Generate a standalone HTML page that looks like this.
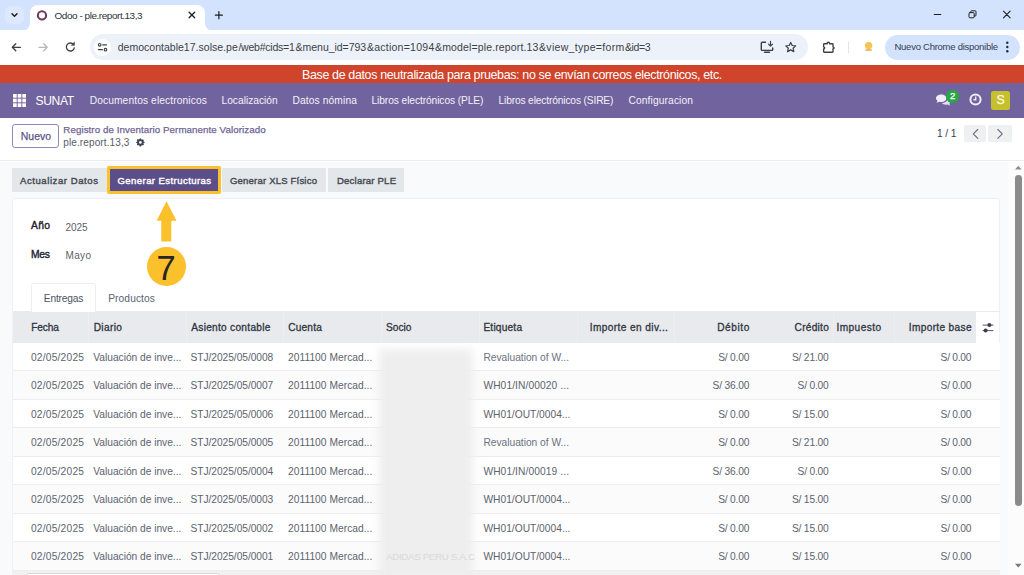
<!DOCTYPE html>
<html lang="es"><head><meta charset="utf-8"><title>Odoo - ple.report.13,3</title>
<style>
*{box-sizing:border-box;margin:0;padding:0}
html,body{width:1024px;height:575px;overflow:hidden;background:#fff;font-family:"Liberation Sans","DejaVu Sans",sans-serif;font-size:11px;color:#374151}
body{position:relative}
.a{position:absolute}
.t{position:absolute;white-space:pre;display:block}
svg{position:absolute;overflow:visible}
#tabstrip{left:0;top:0;width:1024px;height:31px;background:#d3e3fd}
#tabsearch{left:5px;top:6px;width:19px;height:18px;border-radius:6px;background:#dde8fc}
#tab{left:30px;top:5px;width:175px;height:26px;background:#fff;border-radius:8px 8px 0 0}
#toolbar{left:0;top:30px;width:1024px;height:35px;background:#fff}
#url{left:90px;top:34px;width:718px;height:26px;border-radius:13px;background:#edf2fa}
#siteinfo{left:94px;top:39px;width:17px;height:17px;border-radius:9px;background:#fff}
#upd{left:885px;top:35px;width:134.5px;height:24.5px;border-radius:12.5px;background:#d3e3fd}
#sep{left:848px;top:41.500px;width:1px;height:11px;background:#dbe3f3}
#red{left:0;top:64.800px;width:1024px;height:18.400px;background:#d0442c}
#nav{left:0;top:83px;width:1024px;height:34.600px;background:#71639e}
#avatar{left:991px;top:90.8px;width:19.4px;height:19px;border-radius:2.5px;background:#c6c02c}
#badge{left:946.4px;top:90.1px;width:12.6px;height:12.6px;border-radius:50%;background:#28a745}
#cp{left:0;top:117.600px;width:1024px;height:43.900px;background:#fff;border-bottom:1px solid #e9ebee}
#nuevo{left:12px;top:123.700px;width:47.200px;height:24px;border:1px solid #9187b8;border-radius:3px;background:#fff}
.pg{top:124.500px;height:17.800px;background:#eef0f2;border-radius:2px}
#content{left:0;top:161.5px;width:1008px;height:414px;background:#f9fafb}
#track{left:1008px;top:161.5px;width:16px;height:414px;background:#fcfcfc}
#thumb{left:1015px;top:174.8px;width:6.7px;height:331px;border-radius:3.4px;background:#8b8b8b}
.sb{position:absolute;top:168.200px;height:23.500px;background:#e4e7ea;border-radius:1px}
#hl{left:107.3px;top:165.5px;width:114px;height:28.5px;background:#5c4e88;border:3px solid #f9c12e;border-radius:2px}
#sheet{left:12px;top:197.900px;width:988.3px;height:380px;background:#fff;border:1px solid #eef0f2;border-radius:3px}
#tabE{left:31px;top:283px;width:64.500px;height:29.500px;background:#fff;border:1px solid #eceef0;border-bottom:none;border-radius:3px 3px 0 0}
#thead{left:12.5px;top:312px;width:963.7px;height:30.5px;background:#e8eaed}
.cs{position:absolute;top:312px;width:1px;height:30.500px;background:#eceef0}
.row{position:absolute;left:12.500px;width:987.500px;height:28.500px;border-bottom:1px solid #ebedf0}
.odd{background:#fff}.even{background:#fbfbfc}
#blur{left:379px;top:349px;width:94px;height:232px;background:#eeeeee;filter:blur(4px)}
#circ{left:147.3px;top:246.8px;width:39px;height:39px;border-radius:50%;background:#fbc12d}
#bottom{left:12.500px;top:571px;width:987.500px;height:5px;background:#f1f1f2}
#hthumb{left:26px;top:572.500px;width:194px;height:5px;border:1px solid #d6d8db;border-radius:3px;background:#fff}
</style></head><body>
<div class="a" id="tabstrip"></div>
<div class="a" id="tabsearch"></div>
<div class="a" id="tab"></div>
<svg style="left:22px;top:23px" width="8" height="8"><path d="M8 8H0A8 8 0 0 0 8 0Z" fill="#fff"/></svg>
<svg style="left:205px;top:23px" width="8" height="8"><path d="M0 8H8A8 8 0 0 1 0 0Z" fill="#fff"/></svg>
<div class="a" id="toolbar"></div>
<div class="a" id="url"></div>
<div class="a" id="siteinfo"></div>
<div class="a" id="upd"></div>
<div class="a" id="sep"></div>
<!-- chrome icons -->
<svg style="left:0;top:0" width="1024" height="65" viewBox="0 0 1024 65" fill="none" stroke-linecap="round" stroke-linejoin="round">
 <path d="M12 13.800l2.500 2.500 2.500-2.500" stroke="#1f1f1f" stroke-width="1.500"/>
 <circle cx="42" cy="15.400" r="4.100" stroke="#6e3d59" stroke-width="2.100"/>
 <path d="M189.100 12.200l5.600 5.600M194.700 12.200l-5.600 5.600" stroke="#1f1f1f" stroke-width="1.300"/>
 <path d="M215.400 15.200h7M218.900 11.700v7" stroke="#1f1f1f" stroke-width="1.200"/>
 <path d="M934.200 14.500h6.600" stroke="#1f1f1f" stroke-width="1"/>
 <rect x="969" y="12.600" width="5.200" height="5.200" rx="1" stroke="#1f1f1f" stroke-width="1"/>
 <path d="M970.800 12.600v-1a.8.800 0 0 1 .8-.8h3.600a.8.800 0 0 1 .8.800v3.600a.8.800 0 0 1-.8.800h-1" stroke="#1f1f1f" stroke-width="1"/>
 <path d="M1003.500 11.200l6.600 6.600M1010.100 11.200l-6.600 6.600" stroke="#1f1f1f" stroke-width="1.100"/>
 <path d="M20.500 47.300H12.500M15.800 43.800L12.300 47.300l3.500 3.500" stroke="#3c4043" stroke-width="1.300"/>
 <path d="M39 47.300H47M43.700 43.800L47.200 47.300 43.700 50.800" stroke="#b4b7bc" stroke-width="1.300"/>
 <path d="M73.600 44.600A4 4 0 1 0 74.300 47.800" stroke="#3c4043" stroke-width="1.300"/>
 <path d="M74.500 42.300v3h-3z" fill="#3c4043" stroke="#3c4043" stroke-width=".5"/>
 <circle cx="99.700" cy="44.800" r="1.300" stroke="#3c4043" stroke-width="1.100"/><path d="M102.700 44.800h3.800" stroke="#3c4043" stroke-width="1.200"/>
 <circle cx="105.500" cy="49.700" r="1.300" stroke="#3c4043" stroke-width="1.100"/><path d="M98.500 49.700h3.800" stroke="#3c4043" stroke-width="1.200"/>
 <path d="M765.500 42.300h-3.300a.9.900 0 0 0-.9.900v6.300a.9.900 0 0 0 .9.900h9.600a.9.900 0 0 0 .9-.9v-1.500M764.500 52.300h5" stroke="#3c4043" stroke-width="1.400"/>
 <path d="M770.500 41.300v4.600M768.500 44.200l2 2 2-2" stroke="#3c4043" stroke-width="1.200"/>
 <path d="M790.700 42.400l1.500 3.100 3.400.4-2.500 2.300.7 3.400-3.100-1.700-3.100 1.700.7-3.400-2.500-2.300 3.400-.4z" stroke="#3c4043" stroke-width="1.200"/>
 <path d="M824.300 43.700H827a1.300 1.500 0 0 1 2.600 0H832.300a.7.700 0 0 1 .7.700V46.800a1.100 1.100 0 0 1 0 2.200V51.500a.7.700 0 0 1-.7.700H824.300a.7.700 0 0 1-.7-.7V49a1.100 1.100 0 0 0 0-2.200V44.400a.7.700 0 0 1 .7-.7z" stroke="#3c4043" stroke-width="1.350" stroke-linejoin="miter"/>
 <circle cx="868.600" cy="45.600" r="3.700" fill="#f6c452" stroke="none"/>
 <rect x="865.300" y="49.300" width="6.600" height="1.500" rx=".5" fill="#eaa840" stroke="none"/>
 <circle cx="1007.300" cy="42.800" r="1.200" fill="#1f2a44"/><circle cx="1007.300" cy="47" r="1.200" fill="#1f2a44"/><circle cx="1007.300" cy="51.200" r="1.200" fill="#1f2a44"/>
</svg>
<div class="a" id="red"></div>
<div class="a" id="nav"></div>
<svg style="left:13.400px;top:94px" width="13" height="13" viewBox="0 0 13 13" fill="#fff"><rect x="0" y="0" width="3.700" height="3.700"/><rect x="4.650" y="0" width="3.700" height="3.700"/><rect x="9.300" y="0" width="3.700" height="3.700"/><rect x="0" y="4.650" width="3.700" height="3.700"/><rect x="4.650" y="4.650" width="3.700" height="3.700"/><rect x="9.300" y="4.650" width="3.700" height="3.700"/><rect x="0" y="9.300" width="3.700" height="3.700"/><rect x="4.650" y="9.300" width="3.700" height="3.700"/><rect x="9.300" y="9.300" width="3.700" height="3.700"/></svg>
<!-- chat icon -->
<svg style="left:935.800px;top:93.800px" width="14.600" height="12.500" viewBox="0 0 14 12"><path d="M5 .5C2.200.5 0 2.100 0 4.100c0 1 .6 1.900 1.500 2.600-.2.700-.6 1.300-1.100 1.700 1 0 2-.4 2.700-.9.600.2 1.200.2 1.900.2 2.800 0 5-1.600 5-3.600S7.800.5 5 .5z" fill="#f1eef9"/><path d="M11 4.600c0 2.300-2.400 4.100-5.400 4.300.9.900 2.300 1.400 3.900 1.400.6 0 1.200-.1 1.700-.2.700.5 1.600.9 2.600.9-.5-.4-.8-1-1-1.600.8-.6 1.200-1.400 1.200-2.300 0-1.100-1.200-2.100-3-2.500z" fill="#e3def0"/></svg>
<div class="a" id="badge"></div>
<svg style="left:968.800px;top:92.500px" width="13" height="13" viewBox="0 0 13 13" fill="none"><circle cx="6.500" cy="6.500" r="5.100" stroke="#f0edf7" stroke-width="2"/><path d="M6.700 3.600v3.200H4.400" stroke="#f0edf7" stroke-width="1.400"/></svg>
<div class="a" id="avatar"></div>
<div class="a" id="cp"></div>
<div class="a" id="nuevo"></div>
<svg style="left:136px;top:137.800px" width="8.800" height="8.800" viewBox="-.5 -.5 11 11"><path d="M5 0l.9.100.3 1.200.9.400 1.100-.6 1.200 1.200-.6 1.100.4.900 1.200.3V5.500l-1.200.3-.4.900.6 1.100-1.200 1.200-1.100-.6-.9.400-.3 1.200H4.100l-.3-1.200-.9-.4-1.100.6L.600 7.800l.6-1.100-.4-.9L-.400 5.500V4.400l1.200-.3.400-.9-.6-1.100L1.800.900l1.100.6.900-.4L4.100.100z" fill="#374151"/><circle cx="5" cy="5" r="1.700" fill="#fff"/></svg>
<div class="a pg" style="left:964px;width:22px"></div>
<div class="a pg" style="left:988px;width:24px"></div>
<svg style="left:960px;top:124px" width="56" height="20" viewBox="0 0 56 20" fill="none" stroke="#6a717c" stroke-width="1.150" stroke-linecap="round" stroke-linejoin="round"><path d="M17.800 5.500L13.300 9.900l4.500 4.400"/><path d="M37.800 5.500l4.500 4.400-4.500 4.400"/></svg>
<div class="a" id="content"></div>
<div class="a" id="track"></div>
<div class="a" id="thumb"></div>
<svg style="left:1014px;top:164px" width="9" height="7"><path d="M1 5.600h6.600L4.300 1.700z" fill="#8b8b8b"/></svg>
<svg style="left:1014px;top:562px" width="9" height="7"><path d="M1 1.700h6.600L4.300 5.600z" fill="#7a7a7a"/></svg>
<div class="sb" style="left:12px;width:95px"></div>
<div class="sb" style="left:222px;width:104px"></div>
<div class="sb" style="left:327.500px;width:76.500px"></div>
<div class="a" id="hl"></div>
<div class="a" id="sheet"></div>
<div class="a" style="left:12.500px;top:311px;width:987.500px;height:1px;background:#e9ebee"></div>
<div class="a" id="tabE"></div>
<div class="a" id="thead"></div>
<div class="row odd" style="top:342.5px"></div>
<div class="row even" style="top:371.0px"></div>
<div class="row odd" style="top:399.5px"></div>
<div class="row even" style="top:428.0px"></div>
<div class="row odd" style="top:456.5px"></div>
<div class="row even" style="top:485.0px"></div>
<div class="row odd" style="top:513.5px"></div>
<div class="row even" style="top:542.0px"></div>
<div class="cs" style="left:88.0px"></div>
<div class="cs" style="left:186.0px"></div>
<div class="cs" style="left:283.0px"></div>
<div class="cs" style="left:381.0px"></div>
<div class="cs" style="left:478.5px"></div>
<div class="cs" style="left:577.0px"></div>
<div class="cs" style="left:674.0px"></div>
<div class="cs" style="left:833.0px"></div>
<div class="cs" style="left:894.0px"></div>
<div class="a" id="bottom"></div>
<div class="a" id="hthumb"></div>
<div class="a" id="blur"></div>
<!-- column settings icon -->
<svg style="left:981.500px;top:322px" width="12" height="12" viewBox="0 0 12 12" fill="none" stroke="#3b414b" stroke-width=".9"><path d="M.7 3.100h10.700M.7 8.600h10.700"/><circle cx="7.400" cy="3.100" r="2" fill="#3b414b" stroke="none"/><circle cx="3.600" cy="8.600" r="2" fill="#3b414b" stroke="none"/></svg>
<!-- arrow + circle -->
<svg style="left:150px;top:198px" width="34" height="46" viewBox="150 198 34 46"><path d="M166.500 201.300L176.500 220.700H171.300V241.600H161.300V220.700H156.600Z" fill="#fbc12d"/></svg>
<div class="a" id="circ"></div>
<span class="t" style="left:54.5px;top:9.00px;height:14px;line-height:14px;font-size:9.97px;color:#303338;letter-spacing:-0.45px;">Odoo - ple.report.13,3</span>
<span class="t" style="left:117.7px;top:40.00px;height:15px;line-height:15px;font-size:10.53px;color:#3c3f46;letter-spacing:0.01px;">democontable17.solse.pe</span><span class="t" style="left:238.4px;top:40.00px;height:15px;line-height:15px;font-size:10.53px;color:#3c3f46;letter-spacing:-0.23px;">/web#cids=1</span><span class="t" style="left:295.6px;top:40.00px;height:15px;line-height:15px;font-size:10.53px;color:#3c3f46;letter-spacing:-0.04px;">&amp;menu_id=793</span><span class="t" style="left:366.9px;top:40.00px;height:15px;line-height:15px;font-size:10.53px;color:#3c3f46;letter-spacing:0.25px;">&amp;action=1094</span><span class="t" style="left:435.0px;top:40.00px;height:15px;line-height:15px;font-size:10.53px;color:#3c3f46;letter-spacing:0.13px;">&amp;model=ple.report.13</span><span class="t" style="left:539.0px;top:40.00px;height:15px;line-height:15px;font-size:10.53px;color:#3c3f46;letter-spacing:0.31px;">&amp;view_type=form</span><span class="t" style="left:625.0px;top:40.00px;height:15px;line-height:15px;font-size:10.53px;color:#3c3f46;letter-spacing:-0.40px;">&amp;id=3</span>
<span class="t" style="left:894.5px;top:40.00px;height:13px;line-height:13px;font-size:9.51px;color:#333c52;letter-spacing:-0.26px;">Nuevo Chrome disponible</span>
<span class="t" style="left:302.0px;top:67.00px;height:17px;line-height:17px;font-size:12.46px;color:#ffffff;letter-spacing:-0.35px;">Base de datos neutralizada para pruebas: no se envían correos electrónicos, etc.</span>
<span class="t" style="left:35.5px;top:93.00px;height:17px;line-height:17px;font-size:12.09px;color:#ffffff;letter-spacing:-0.34px;">SUNAT</span>
<span class="t" style="left:89.7px;top:94.00px;height:14px;line-height:14px;font-size:10.23px;color:#f3f1f8;letter-spacing:0.11px;">Documentos electronicos</span>
<span class="t" style="left:221.5px;top:94.00px;height:14px;line-height:14px;font-size:10.23px;color:#f3f1f8;letter-spacing:0.00px;">Localización</span>
<span class="t" style="left:292.5px;top:94.00px;height:14px;line-height:14px;font-size:10.23px;color:#f3f1f8;letter-spacing:0.12px;">Datos nómina</span>
<span class="t" style="left:371.5px;top:94.00px;height:14px;line-height:14px;font-size:10.23px;color:#f3f1f8;letter-spacing:-0.09px;">Libros electrónicos (PLE)</span>
<span class="t" style="left:498.5px;top:94.00px;height:14px;line-height:14px;font-size:10.23px;color:#f3f1f8;letter-spacing:-0.15px;">Libros electrónicos (SIRE)</span>
<span class="t" style="left:628.5px;top:94.00px;height:14px;line-height:14px;font-size:10.23px;color:#f3f1f8;letter-spacing:0.12px;">Configuracion</span>
<span class="t" style="left:950.1px;top:89.00px;height:13px;line-height:13px;font-size:9.6px;-webkit-text-stroke:.25px;color:#ffffff;letter-spacing:0.00px;">2</span>
<span class="t" style="left:996.5px;top:92.00px;height:17px;line-height:17px;font-size:12.3px;-webkit-text-stroke:.25px;color:#fbfbe8;letter-spacing:0.00px;">S</span>
<span class="t" style="left:20.8px;top:129.00px;height:15px;line-height:15px;font-size:10.45px;-webkit-text-stroke:.25px;color:#5f5589;letter-spacing:0.03px;">Nuevo</span>
<span class="t" style="left:63.3px;top:123.00px;height:14px;line-height:14px;font-size:9.75px;-webkit-text-stroke:.25px;color:#6f6594;letter-spacing:0.07px;">Registro de Inventario Permanente Valorizado</span>
<span class="t" style="left:63.3px;top:136.00px;height:14px;line-height:14px;font-size:10.04px;color:#565c66;letter-spacing:0.10px;">ple.report.13,3</span>
<span class="t" style="left:937.0px;top:127.00px;height:14px;line-height:14px;font-size:10.23px;color:#374151;letter-spacing:-0.12px;">1 / 1</span>
<span class="t" style="left:20.0px;top:174.00px;height:13px;line-height:13px;font-size:9.54px;-webkit-text-stroke:.4px;color:#444a54;letter-spacing:0.57px;">Actualizar Datos</span>
<span class="t" style="left:117.5px;top:174.00px;height:13px;line-height:13px;font-size:9.54px;-webkit-text-stroke:.4px;color:#ffffff;letter-spacing:0.43px;">Generar Estructuras</span>
<span class="t" style="left:230.0px;top:174.00px;height:13px;line-height:13px;font-size:9.54px;-webkit-text-stroke:.4px;color:#444a54;letter-spacing:0.19px;">Generar XLS Físico</span>
<span class="t" style="left:337.0px;top:174.00px;height:13px;line-height:13px;font-size:9.54px;-webkit-text-stroke:.4px;color:#444a54;letter-spacing:0.21px;">Declarar PLE</span>
<span class="t" style="left:31.0px;top:219.00px;height:14px;line-height:14px;font-size:10.26px;-webkit-text-stroke:.4px;color:#1f2430;letter-spacing:0.38px;">Año</span>
<span class="t" style="left:65.5px;top:221.00px;height:14px;line-height:14px;font-size:10.04px;color:#5b626c;letter-spacing:-0.11px;">2025</span>
<span class="t" style="left:31.0px;top:248.00px;height:14px;line-height:14px;font-size:10.26px;-webkit-text-stroke:.4px;color:#1f2430;letter-spacing:-0.19px;">Mes</span>
<span class="t" style="left:65.5px;top:249.00px;height:14px;line-height:14px;font-size:10.04px;color:#5b626c;letter-spacing:0.32px;">Mayo</span>
<span class="t" style="left:43.8px;top:292.00px;height:14px;line-height:14px;font-size:10.23px;color:#4b5563;letter-spacing:-0.20px;">Entregas</span>
<span class="t" style="left:108.2px;top:292.00px;height:14px;line-height:14px;font-size:10.23px;color:#5b6470;letter-spacing:0.09px;">Productos</span>
<span class="t" style="left:156.6px;top:244.00px;height:48px;line-height:48px;font-size:34.5px;color:#262626;letter-spacing:0.00px;">7</span>
<span class="t" style="left:31.3px;top:321.00px;height:14px;line-height:14px;font-size:10.15px;-webkit-text-stroke:.3px;color:#2f3540;letter-spacing:-0.16px;">Fecha</span>
<span class="t" style="left:93.7px;top:321.00px;height:14px;line-height:14px;font-size:10.15px;-webkit-text-stroke:.3px;color:#2f3540;letter-spacing:0.35px;">Diario</span>
<span class="t" style="left:191.3px;top:321.00px;height:14px;line-height:14px;font-size:10.15px;-webkit-text-stroke:.3px;color:#2f3540;letter-spacing:0.28px;">Asiento contable</span>
<span class="t" style="left:288.2px;top:321.00px;height:14px;line-height:14px;font-size:10.15px;-webkit-text-stroke:.3px;color:#2f3540;letter-spacing:0.19px;">Cuenta</span>
<span class="t" style="left:386.1px;top:321.00px;height:14px;line-height:14px;font-size:10.15px;-webkit-text-stroke:.3px;color:#2f3540;letter-spacing:-0.01px;">Socio</span>
<span class="t" style="left:483.4px;top:321.00px;height:14px;line-height:14px;font-size:10.15px;-webkit-text-stroke:.3px;color:#2f3540;letter-spacing:0.21px;">Etiqueta</span>
<span class="t" style="left:589.7px;top:321.00px;height:14px;line-height:14px;font-size:10.15px;-webkit-text-stroke:.3px;color:#2f3540;letter-spacing:0.40px;">Importe en div...</span>
<span class="t" style="left:717.2px;top:321.00px;height:14px;line-height:14px;font-size:10.15px;-webkit-text-stroke:.3px;color:#2f3540;letter-spacing:0.58px;">Débito</span>
<span class="t" style="left:794.6px;top:321.00px;height:14px;line-height:14px;font-size:10.15px;-webkit-text-stroke:.3px;color:#2f3540;letter-spacing:0.26px;">Crédito</span>
<span class="t" style="left:836.4px;top:321.00px;height:14px;line-height:14px;font-size:10.15px;-webkit-text-stroke:.3px;color:#2f3540;letter-spacing:0.45px;">Impuesto</span>
<span class="t" style="left:908.8px;top:321.00px;height:14px;line-height:14px;font-size:10.15px;-webkit-text-stroke:.3px;color:#2f3540;letter-spacing:0.33px;">Importe base</span>
<span class="t" style="left:30.9px;top:351.00px;height:14px;line-height:14px;font-size:10.23px;color:#5c636d;letter-spacing:0.22px;">02/05/2025</span>
<span class="t" style="left:93.3px;top:351.00px;height:14px;line-height:14px;font-size:10.23px;color:#5c636d;letter-spacing:-0.02px;">Valuación de inve...</span>
<span class="t" style="left:190.6px;top:351.00px;height:14px;line-height:14px;font-size:10.23px;color:#5c636d;letter-spacing:-0.06px;">STJ/2025/05/0008</span>
<span class="t" style="left:288.0px;top:351.00px;height:14px;line-height:14px;font-size:10.23px;color:#5c636d;letter-spacing:0.04px;">2011100 Mercad...</span>
<span class="t" style="left:483.4px;top:351.00px;height:14px;line-height:14px;font-size:10.23px;color:#6b7280;letter-spacing:-0.01px;">Revaluation of W...</span>
<span class="t" style="left:718.2px;top:351.00px;height:14px;line-height:14px;font-size:10.23px;color:#5c636d;letter-spacing:-0.20px;">S/ 0.00</span>
<span class="t" style="left:791.9px;top:351.00px;height:14px;line-height:14px;font-size:10.23px;color:#5c636d;letter-spacing:-0.17px;">S/ 21.00</span>
<span class="t" style="left:940.6px;top:351.00px;height:14px;line-height:14px;font-size:10.23px;color:#5c636d;letter-spacing:-0.25px;">S/ 0.00</span>
<span class="t" style="left:30.9px;top:379.00px;height:14px;line-height:14px;font-size:10.23px;color:#5c636d;letter-spacing:0.22px;">02/05/2025</span>
<span class="t" style="left:93.3px;top:379.00px;height:14px;line-height:14px;font-size:10.23px;color:#5c636d;letter-spacing:-0.02px;">Valuación de inve...</span>
<span class="t" style="left:190.6px;top:379.00px;height:14px;line-height:14px;font-size:10.23px;color:#5c636d;letter-spacing:-0.06px;">STJ/2025/05/0007</span>
<span class="t" style="left:288.0px;top:379.00px;height:14px;line-height:14px;font-size:10.23px;color:#5c636d;letter-spacing:0.04px;">2011100 Mercad...</span>
<span class="t" style="left:483.4px;top:379.00px;height:14px;line-height:14px;font-size:10.23px;color:#5c636d;letter-spacing:0.10px;">WH01/IN/00020 ...</span>
<span class="t" style="left:712.6px;top:379.00px;height:14px;line-height:14px;font-size:10.23px;color:#5c636d;letter-spacing:-0.18px;">S/ 36.00</span>
<span class="t" style="left:797.5px;top:379.00px;height:14px;line-height:14px;font-size:10.23px;color:#5c636d;letter-spacing:-0.18px;">S/ 0.00</span>
<span class="t" style="left:940.6px;top:379.00px;height:14px;line-height:14px;font-size:10.23px;color:#5c636d;letter-spacing:-0.25px;">S/ 0.00</span>
<span class="t" style="left:30.9px;top:408.00px;height:14px;line-height:14px;font-size:10.23px;color:#5c636d;letter-spacing:0.22px;">02/05/2025</span>
<span class="t" style="left:93.3px;top:408.00px;height:14px;line-height:14px;font-size:10.23px;color:#5c636d;letter-spacing:-0.02px;">Valuación de inve...</span>
<span class="t" style="left:190.6px;top:408.00px;height:14px;line-height:14px;font-size:10.23px;color:#5c636d;letter-spacing:-0.06px;">STJ/2025/05/0006</span>
<span class="t" style="left:288.0px;top:408.00px;height:14px;line-height:14px;font-size:10.23px;color:#5c636d;letter-spacing:0.04px;">2011100 Mercad...</span>
<span class="t" style="left:483.4px;top:408.00px;height:14px;line-height:14px;font-size:10.23px;color:#5c636d;letter-spacing:0.01px;">WH01/OUT/0004...</span>
<span class="t" style="left:718.2px;top:408.00px;height:14px;line-height:14px;font-size:10.23px;color:#5c636d;letter-spacing:-0.20px;">S/ 0.00</span>
<span class="t" style="left:791.9px;top:408.00px;height:14px;line-height:14px;font-size:10.23px;color:#5c636d;letter-spacing:-0.17px;">S/ 15.00</span>
<span class="t" style="left:940.6px;top:408.00px;height:14px;line-height:14px;font-size:10.23px;color:#5c636d;letter-spacing:-0.25px;">S/ 0.00</span>
<span class="t" style="left:30.9px;top:436.00px;height:14px;line-height:14px;font-size:10.23px;color:#5c636d;letter-spacing:0.22px;">02/05/2025</span>
<span class="t" style="left:93.3px;top:436.00px;height:14px;line-height:14px;font-size:10.23px;color:#5c636d;letter-spacing:-0.02px;">Valuación de inve...</span>
<span class="t" style="left:190.6px;top:436.00px;height:14px;line-height:14px;font-size:10.23px;color:#5c636d;letter-spacing:-0.06px;">STJ/2025/05/0005</span>
<span class="t" style="left:288.0px;top:436.00px;height:14px;line-height:14px;font-size:10.23px;color:#5c636d;letter-spacing:0.04px;">2011100 Mercad...</span>
<span class="t" style="left:483.4px;top:436.00px;height:14px;line-height:14px;font-size:10.23px;color:#6b7280;letter-spacing:-0.01px;">Revaluation of W...</span>
<span class="t" style="left:718.2px;top:436.00px;height:14px;line-height:14px;font-size:10.23px;color:#5c636d;letter-spacing:-0.20px;">S/ 0.00</span>
<span class="t" style="left:791.9px;top:436.00px;height:14px;line-height:14px;font-size:10.23px;color:#5c636d;letter-spacing:-0.17px;">S/ 21.00</span>
<span class="t" style="left:940.6px;top:436.00px;height:14px;line-height:14px;font-size:10.23px;color:#5c636d;letter-spacing:-0.25px;">S/ 0.00</span>
<span class="t" style="left:30.9px;top:465.00px;height:14px;line-height:14px;font-size:10.23px;color:#5c636d;letter-spacing:0.22px;">02/05/2025</span>
<span class="t" style="left:93.3px;top:465.00px;height:14px;line-height:14px;font-size:10.23px;color:#5c636d;letter-spacing:-0.02px;">Valuación de inve...</span>
<span class="t" style="left:190.6px;top:465.00px;height:14px;line-height:14px;font-size:10.23px;color:#5c636d;letter-spacing:-0.06px;">STJ/2025/05/0004</span>
<span class="t" style="left:288.0px;top:465.00px;height:14px;line-height:14px;font-size:10.23px;color:#5c636d;letter-spacing:0.04px;">2011100 Mercad...</span>
<span class="t" style="left:483.4px;top:465.00px;height:14px;line-height:14px;font-size:10.23px;color:#5c636d;letter-spacing:0.10px;">WH01/IN/00019 ...</span>
<span class="t" style="left:712.6px;top:465.00px;height:14px;line-height:14px;font-size:10.23px;color:#5c636d;letter-spacing:-0.18px;">S/ 36.00</span>
<span class="t" style="left:797.5px;top:465.00px;height:14px;line-height:14px;font-size:10.23px;color:#5c636d;letter-spacing:-0.18px;">S/ 0.00</span>
<span class="t" style="left:940.6px;top:465.00px;height:14px;line-height:14px;font-size:10.23px;color:#5c636d;letter-spacing:-0.25px;">S/ 0.00</span>
<span class="t" style="left:30.9px;top:493.00px;height:14px;line-height:14px;font-size:10.23px;color:#5c636d;letter-spacing:0.22px;">02/05/2025</span>
<span class="t" style="left:93.3px;top:493.00px;height:14px;line-height:14px;font-size:10.23px;color:#5c636d;letter-spacing:-0.02px;">Valuación de inve...</span>
<span class="t" style="left:190.6px;top:493.00px;height:14px;line-height:14px;font-size:10.23px;color:#5c636d;letter-spacing:-0.06px;">STJ/2025/05/0003</span>
<span class="t" style="left:288.0px;top:493.00px;height:14px;line-height:14px;font-size:10.23px;color:#5c636d;letter-spacing:0.04px;">2011100 Mercad...</span>
<span class="t" style="left:483.4px;top:493.00px;height:14px;line-height:14px;font-size:10.23px;color:#5c636d;letter-spacing:0.01px;">WH01/OUT/0004...</span>
<span class="t" style="left:718.2px;top:493.00px;height:14px;line-height:14px;font-size:10.23px;color:#5c636d;letter-spacing:-0.20px;">S/ 0.00</span>
<span class="t" style="left:791.9px;top:493.00px;height:14px;line-height:14px;font-size:10.23px;color:#5c636d;letter-spacing:-0.17px;">S/ 15.00</span>
<span class="t" style="left:940.6px;top:493.00px;height:14px;line-height:14px;font-size:10.23px;color:#5c636d;letter-spacing:-0.25px;">S/ 0.00</span>
<span class="t" style="left:30.9px;top:522.00px;height:14px;line-height:14px;font-size:10.23px;color:#5c636d;letter-spacing:0.22px;">02/05/2025</span>
<span class="t" style="left:93.3px;top:522.00px;height:14px;line-height:14px;font-size:10.23px;color:#5c636d;letter-spacing:-0.02px;">Valuación de inve...</span>
<span class="t" style="left:190.6px;top:522.00px;height:14px;line-height:14px;font-size:10.23px;color:#5c636d;letter-spacing:-0.06px;">STJ/2025/05/0002</span>
<span class="t" style="left:288.0px;top:522.00px;height:14px;line-height:14px;font-size:10.23px;color:#5c636d;letter-spacing:0.04px;">2011100 Mercad...</span>
<span class="t" style="left:483.4px;top:522.00px;height:14px;line-height:14px;font-size:10.23px;color:#5c636d;letter-spacing:0.01px;">WH01/OUT/0004...</span>
<span class="t" style="left:718.2px;top:522.00px;height:14px;line-height:14px;font-size:10.23px;color:#5c636d;letter-spacing:-0.20px;">S/ 0.00</span>
<span class="t" style="left:791.9px;top:522.00px;height:14px;line-height:14px;font-size:10.23px;color:#5c636d;letter-spacing:-0.17px;">S/ 15.00</span>
<span class="t" style="left:940.6px;top:522.00px;height:14px;line-height:14px;font-size:10.23px;color:#5c636d;letter-spacing:-0.25px;">S/ 0.00</span>
<span class="t" style="left:30.9px;top:550.00px;height:14px;line-height:14px;font-size:10.23px;color:#5c636d;letter-spacing:0.22px;">02/05/2025</span>
<span class="t" style="left:93.3px;top:550.00px;height:14px;line-height:14px;font-size:10.23px;color:#5c636d;letter-spacing:-0.02px;">Valuación de inve...</span>
<span class="t" style="left:190.6px;top:550.00px;height:14px;line-height:14px;font-size:10.23px;color:#5c636d;letter-spacing:-0.06px;">STJ/2025/05/0001</span>
<span class="t" style="left:288.0px;top:550.00px;height:14px;line-height:14px;font-size:10.23px;color:#5c636d;letter-spacing:0.04px;">2011100 Mercad...</span>
<span class="t" style="left:483.4px;top:550.00px;height:14px;line-height:14px;font-size:10.23px;color:#5c636d;letter-spacing:0.01px;">WH01/OUT/0004...</span>
<span class="t" style="left:718.2px;top:550.00px;height:14px;line-height:14px;font-size:10.23px;color:#5c636d;letter-spacing:-0.20px;">S/ 0.00</span>
<span class="t" style="left:791.9px;top:550.00px;height:14px;line-height:14px;font-size:10.23px;color:#5c636d;letter-spacing:-0.17px;">S/ 15.00</span>
<span class="t" style="left:940.6px;top:550.00px;height:14px;line-height:14px;font-size:10.23px;color:#5c636d;letter-spacing:-0.25px;">S/ 0.00</span>
<span class="t" style="left:386.0px;top:550.00px;height:14px;line-height:14px;font-size:9.77px;color:#d9d9d9;letter-spacing:-0.34px;">ADIDAS PERU S.A.C</span>
</body></html>
